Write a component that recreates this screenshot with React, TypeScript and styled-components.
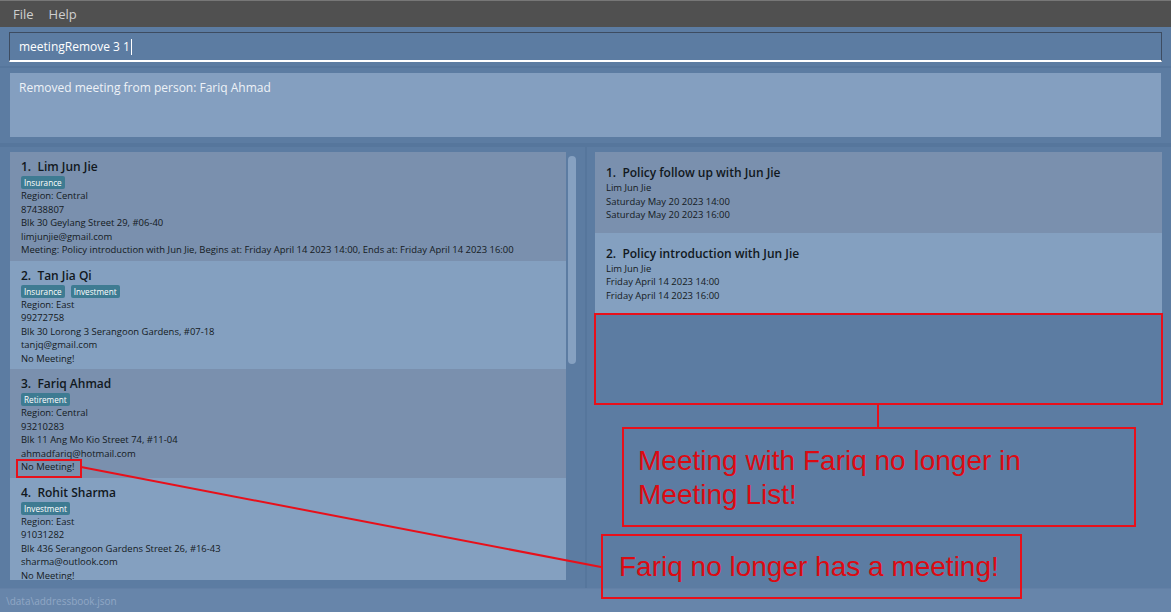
import React from "react";
import styled, { createGlobalStyle } from "styled-components";

const Global = createGlobalStyle`
  html, body { margin: 0; padding: 0; background: #5c7ca2; }
  body { font-family: "Open Sans", "Noto Sans", sans-serif; }
  * { box-sizing: border-box; }
`;

const Window = styled.div`
  position: relative;
  width: 1171px;
  height: 612px;
  display: flex;
  flex-direction: column;
  background: #5c7ca2;
  overflow: hidden;
`;

const MenuBar = styled.div`
  height: 27px;
  flex: none;
  display: flex;
  align-items: center;
  gap: 15px;
  padding: 0 0 0 13px;
  background: #505050;
  border-top: 1px solid #777;
`;

const MenuItem = styled.span`
  font-family: "Open Sans", sans-serif;
  font-size: 13px;
  color: #cfcfcf;
`;

const CommandSection = styled.div`
  flex: none;
  padding: 5px 9px 4px 9px;
`;

const CommandInput = styled.div`
  height: 30px;
  display: flex;
  align-items: center;
  padding: 0 9px;
  border: 1px solid #3d4c61;
  border-bottom: 2px solid #ffffff;
  font-size: 12px;
  color: #ffffff;
  background: #5c7ca2;
`;

const Caret = styled.span`
  display: inline-block;
  width: 1px;
  height: 16px;
  background: #ffffff;
  margin-left: 1px;
`;

const HDivider = styled.div<{ $h: number }>`
  flex: none;
  height: ${(p) => p.$h}px;
  background: #56769c;
`;

const ResultSection = styled.div`
  flex: none;
  padding: 5px 10px 6px 10px;
`;

const ResultBox = styled.div`
  height: 64px;
  background: #849fc0;
  padding: 6px 9px;
  font-size: 12px;
  color: #eef2f7;
`;

const ListsRow = styled.div`
  flex: 1;
  display: flex;
  min-height: 0;
`;

const LeftPane = styled.div`
  width: 585px;
  flex: none;
  display: flex;
  gap: 2px;
  padding: 5px 9px 8px 10px;
`;

const VDivider = styled.div`
  width: 2px;
  flex: none;
  background: #56769c;
`;

const RightPane = styled.div`
  flex: 1;
  padding: 5px 9px 8px 8px;
`;

const PersonList = styled.div`
  width: 556px;
  height: 100%;
  overflow: hidden;
  display: flex;
  flex-direction: column;
`;

const ScrollThumb = styled.div`
  width: 8px;
  height: 208px;
  margin-top: 4px;
  border-radius: 4px;
  background: #86a1c1;
`;

const Card = styled.div<{ $odd: boolean; $pad: string }>`
  flex: none;
  background: ${(p) => (p.$odd ? "#7a90ae" : "#84a0c0")};
  padding: ${(p) => p.$pad};
  display: flex;
  flex-direction: column;
`;

const CardTitle = styled.div`
  font-family: "Open Sans", sans-serif;
  font-weight: 600;
  font-size: 12px;
  line-height: 17px;
  color: #111820;
  white-space: pre;
`;

const TagRow = styled.div`
  display: flex;
  gap: 6px;
  height: 13px;
  margin-top: 1px;
`;

const Tag = styled.span`
  height: 13px;
  line-height: 13px;
  padding: 0 3px;
  border-radius: 2px;
  background: #3e7b92;
  color: #ffffff;
  font-size: 8.2px;
`;

const Line = styled.div`
  font-size: 9.45px;
  line-height: 13.5px;
  color: #141a22;
  white-space: nowrap;
`;

const StatusBar = styled.div`
  flex: none;
  height: 24px;
  display: flex;
  align-items: center;
  padding-left: 6px;
  background: #6785aa;
  border-top: 1px solid #6380a6;
  font-size: 10px;
  color: #90a7c5;
`;

const Overlay = styled.svg`
  position: absolute;
  left: 0;
  top: 0;
  pointer-events: none;
`;

const Callout = styled.div<{ $l: number; $t: number; $w: number; $h: number; $pad: string }>`
  position: absolute;
  left: ${(p) => p.$l}px;
  top: ${(p) => p.$t}px;
  width: ${(p) => p.$w}px;
  height: ${(p) => p.$h}px;
  border: 2px solid #e8101a;
  padding: ${(p) => p.$pad};
  font-family: "Liberation Sans", Arial, sans-serif;
  font-size: 28px;
  line-height: 34px;
  color: #dc0a12;
`;

type Person = {
  name: string;
  tags: string[];
  lines: string[];
};

const people: Person[] = [
  {
    name: "Lim Jun Jie",
    tags: ["Insurance"],
    lines: [
      "Region: Central",
      "87438807",
      "Blk 30 Geylang Street 29, #06-40",
      "limjunjie@gmail.com",
      "Meeting: Policy introduction with Jun Jie, Begins at: Friday April 14 2023 14:00, Ends at: Friday April 14 2023 16:00",
    ],
  },
  {
    name: "Tan Jia Qi",
    tags: ["Insurance", "Investment"],
    lines: [
      "Region: East",
      "99272758",
      "Blk 30 Lorong 3 Serangoon Gardens, #07-18",
      "tanjq@gmail.com",
      "No Meeting!",
    ],
  },
  {
    name: "Fariq Ahmad",
    tags: ["Retirement"],
    lines: [
      "Region: Central",
      "93210283",
      "Blk 11 Ang Mo Kio Street 74, #11-04",
      "ahmadfariq@hotmail.com",
      "No Meeting!",
    ],
  },
  {
    name: "Rohit Sharma",
    tags: ["Investment"],
    lines: [
      "Region: East",
      "91031282",
      "Blk 436 Serangoon Gardens Street 26, #16-43",
      "sharma@outlook.com",
      "No Meeting!",
    ],
  },
];

const meetings = [
  {
    title: "Policy follow up with Jun Jie",
    lines: ["Lim Jun Jie", "Saturday May 20 2023 14:00", "Saturday May 20 2023 16:00"],
  },
  {
    title: "Policy introduction with Jun Jie",
    lines: ["Lim Jun Jie", "Friday April 14 2023 14:00", "Friday April 14 2023 16:00"],
  },
];

export default function App() {
  return (
    <>
      <Global />
      <Window>
        <MenuBar>
          <MenuItem>File</MenuItem>
          <MenuItem>Help</MenuItem>
        </MenuBar>
        <CommandSection>
          <CommandInput>
            meetingRemove 3 1<Caret />
          </CommandInput>
        </CommandSection>
        <HDivider $h={2} />
        <ResultSection>
          <ResultBox>Removed meeting from person: Fariq Ahmad</ResultBox>
        </ResultSection>
        <HDivider $h={4} />
        <ListsRow>
          <LeftPane>
            <PersonList>
              {people.map((p, i) => (
                <Card key={p.name} $odd={i % 2 === 0} $pad="6px 11px 4px 11px">
                  <CardTitle>{`${i + 1}.  ${p.name}`}</CardTitle>
                  <TagRow>
                    {p.tags.map((t) => (
                      <Tag key={t}>{t}</Tag>
                    ))}
                  </TagRow>
                  {p.lines.map((l, j) => (
                    <Line key={j}>{l}</Line>
                  ))}
                </Card>
              ))}
            </PersonList>
            <ScrollThumb />
          </LeftPane>
          <VDivider />
          <RightPane>
            {meetings.map((m, i) => (
              <Card key={m.title} $odd={i % 2 === 0} $pad="12px 11px 11px 11px">
                <CardTitle>{`${i + 1}.  ${m.title}`}</CardTitle>
                {m.lines.map((l, j) => (
                  <Line key={j}>{l}</Line>
                ))}
              </Card>
            ))}
          </RightPane>
        </ListsRow>
        <StatusBar>\data\addressbook.json</StatusBar>

        <Overlay width={1171} height={612}>
          <rect x={595} y={314} width={567} height={90} fill="none" stroke="#e8101a" strokeWidth={2} />
          <line x1={878} y1={404} x2={878} y2={427} stroke="#e8101a" strokeWidth={2} />
          <rect x={17} y={460} width={64} height={17} fill="none" stroke="#e8101a" strokeWidth={2} />
          <line x1={81} y1={467} x2={601} y2={567} stroke="#e8101a" strokeWidth={2} />
        </Overlay>
        <Callout $l={622} $t={427} $w={514} $h={100} $pad="15px 14px">
          Meeting with Fariq no longer in
          <br />
          Meeting List!
        </Callout>
        <Callout $l={601} $t={534} $w={421} $h={65} $pad="14px 16px">
          Fariq no longer has a meeting!
        </Callout>
      </Window>
    </>
  );
}
